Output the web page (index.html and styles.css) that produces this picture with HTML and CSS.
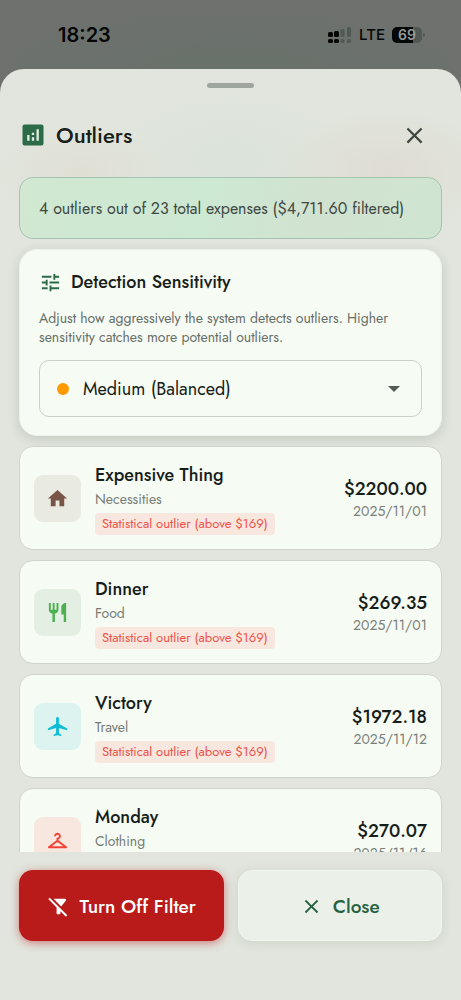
FILE: index.html
```html
<!DOCTYPE html>
<html lang="en">
<head>
<meta charset="utf-8">
<meta name="viewport" content="width=device-width, initial-scale=1">
<title>Outliers</title>
<link rel="stylesheet" href="styles.css">
</head>
<body>
<div class="screen">
  <header class="status">
    <time class="clock">18:23</time>
    <div class="status-right">
      <svg class="signal" viewBox="0 0 24 16" aria-hidden="true">
        <g fill="#050706"><rect x="0" y="5" width="5" height="5" rx="1.5"/><rect x="0" y="12" width="5" height="4" rx="1.5"/><rect x="6" y="4" width="5" height="6" rx="1.5"/><rect x="6" y="12" width="5" height="4" rx="1.5"/></g>
        <g fill="#505953"><rect x="12.500" y="2" width="4" height="8" rx="1.500"/><rect x="12.500" y="12" width="4" height="4" rx="1.500"/><rect x="19" y="0" width="4" height="10" rx="1.500"/><rect x="19" y="12" width="4" height="4" rx="1.500"/></g>
      </svg>
      <span class="network">LTE</span>
      <span class="battery">69</span>
    </div>
  </header>

  <main class="sheet">
    <div class="handle"></div>
    <div class="sheet-head">
      <svg class="head-icon" viewBox="0 0 24 24" aria-hidden="true"><rect x="3" y="3" width="18" height="18" rx="1.800" fill="#2b6b47"/><path fill="#e3ece3" d="M9 17H7v-5h2zM13 17h-2v-3h2zM13 12h-2v-2h2zM17 17h-2V7h2z"/></svg>
      <h1>Outliers</h1>
      <button class="dismiss" type="button" aria-label="Dismiss">
        <svg viewBox="0 0 24 24"><path d="M19 6.410 17.590 5 12 10.590 6.410 5 5 6.410 10.590 12 5 17.590 6.410 19 12 13.410 17.590 19 19 17.590 13.410 12z"/></svg>
      </button>
    </div>

    <p class="summary">4 outliers out of 23 total expenses ($4,711.60 filtered)</p>

    <section class="sensitivity">
      <h2>
        <svg viewBox="0 0 24 24" aria-hidden="true"><path d="M3 17v2h6v-2H3zM3 5v2h10V5H3zm10 16v-2h8v-2h-8v-2h-2v6h2zM7 9v2H3v2h4v2h2V9H7zm14 4v-2H11v2h10zm-6-4h2V7h4V5h-4V3h-2v6z"/></svg>
        <label for="level">Detection Sensitivity</label>
      </h2>
      <p class="hint">Adjust how aggressively the system detects outliers. Higher sensitivity catches more potential outliers.</p>
      <div class="picker">
        <span class="level-dot"></span>
        <select id="level"><option>Medium (Balanced)</option></select>
      </div>
    </section>

    <ul class="expenses">
      <li class="expense">
        <span class="tile home"><svg viewBox="0 0 24 24" aria-hidden="true"><path d="M10 20v-6h4v6h5v-8h3L12 3 2 12h3v8z"/></svg></span>
        <div class="what"><h3>Expensive Thing</h3><p>Necessities</p><span class="chip">Statistical outlier (above $169)</span></div>
        <div class="cost"><strong>$2200.00</strong><time>2025/11/01</time></div>
      </li>
      <li class="expense">
        <span class="tile food"><svg viewBox="0 0 24 24" aria-hidden="true"><path d="M11 9H9V2H7v7H5V2H3v7c0 2.120 1.660 3.840 3.750 3.970V22h2.500v-9.030C11.340 12.840 13 11.120 13 9V2h-2v7zm5-3v8h2.500v8H21V2c-2.760 0-5 2.240-5 4z"/></svg></span>
        <div class="what"><h3>Dinner</h3><p>Food</p><span class="chip">Statistical outlier (above $169)</span></div>
        <div class="cost"><strong>$269.35</strong><time>2025/11/01</time></div>
      </li>
      <li class="expense">
        <span class="tile travel"><svg viewBox="0 0 24 24" aria-hidden="true"><path d="M22 16v-2l-8.500-5V3.500c0-.830-.670-1.500-1.500-1.500s-1.500.670-1.500 1.500V9L2 14v2l8.500-2.500V19L8 20.500V22l4-1 4 1v-1.500L13.500 19v-5.500L22 16z"/></svg></span>
        <div class="what"><h3>Victory</h3><p>Travel</p><span class="chip">Statistical outlier (above $169)</span></div>
        <div class="cost"><strong>$1972.18</strong><time>2025/11/12</time></div>
      </li>
      <li class="expense">
        <span class="tile clothes"><svg viewBox="0 0 24 24" aria-hidden="true"><path d="M21.600 18.200 13 11.750v-.910c1.650-.490 2.800-2.170 2.430-4.050-.260-1.310-1.300-2.400-2.610-2.700C10.540 3.570 8.500 5.300 8.500 7.500h2c0-.830.670-1.500 1.500-1.500s1.500.670 1.500 1.500c0 .840-.690 1.520-1.530 1.500-.540-.010-.970.450-.970.990v1.760L2.400 18.200c-.770.580-.360 1.800.6 1.800h18c.960 0 1.370-1.220.6-1.800zM6 18l6-4.500 6 4.500H6z"/></svg></span>
        <div class="what"><h3>Monday</h3><p>Clothing</p><span class="chip">Statistical outlier (above $169)</span></div>
        <div class="cost"><strong>$270.07</strong><time>2025/11/16</time></div>
      </li>
    </ul>

    <footer class="actions">
      <button class="action danger" type="button">
        <svg viewBox="0 0 24 24" aria-hidden="true"><path d="M19.790 5.610C20.300 4.950 19.830 4 19 4H6.830l7.970 7.970 4.990-6.360zM2.810 2.810 1.390 4.220 10 13v6c0 .550.450 1 1 1h2c.550 0 1-.450 1-1v-2.170l5.780 5.780 1.410-1.410z"/></svg>
        Turn Off Filter
      </button>
      <button class="action plain" type="button">
        <svg viewBox="0 0 24 24" aria-hidden="true"><path d="M19 6.410 17.590 5 12 10.590 6.410 5 5 6.410 10.590 12 5 17.590 6.410 19 12 13.410 17.590 19 19 17.590 13.410 12z"/></svg>
        Close
      </button>
    </footer>
  </main>
</div>
</body>
</html>
```
FILE: styles.css
```css
* { box-sizing: border-box; }

body, h1, h2, h3, p, ul { margin: 0; padding: 0; }

body {
  font-family: Jost, Lato, sans-serif;
  color: #171d19;
  background: #6c716d;
}

button, select { font: inherit; color: inherit; }

.screen {
  height: 100vh;
  display: flex;
  flex-direction: column;
  background:
    radial-gradient(ellipse 240px 60px at 50% 69px, #68716a, transparent),
    #6e716e;
}

.status {
  flex: none;
  height: 69px;
  padding: 0 39px 0 58px;
  display: flex;
  align-items: center;
  justify-content: space-between;
  font-family: Inter, sans-serif;
  color: #050706;
}

.clock { font-size: 20px; font-weight: 600; }

.status-right { display: flex; align-items: center; gap: 7px; }

.signal { width: 24px; height: 16px; }

.network { font-size: 15px; font-weight: 500; line-height: 20px; }

.battery {
  position: relative;
  width: 30px;
  height: 16px;
  border-radius: 5px;
  background: linear-gradient(90deg, #050706 70%, #505953 70%);
  color: #949b96;
  font-size: 14px;
  font-weight: 600;
  line-height: 16px;
  text-align: center;
}

.battery::after {
  content: "";
  position: absolute;
  left: 31px;
  top: 6px;
  width: 2px;
  height: 4px;
  border-radius: 0 2px 2px 0;
  background: #505953;
}

.sheet {
  flex: 1;
  min-height: 0;
  display: flex;
  flex-direction: column;
  border-radius: 24px 24px 0 0;
  background:
    radial-gradient(ellipse 110px 60px at 84% 100px, #dfdcd2, transparent),
    radial-gradient(ellipse 90px 50px at 18% 105px, #e0dfd4, transparent),
    radial-gradient(ellipse 130px 70px at 50% 90px, #dbe3da, transparent),
    #e1e5dd;
}

.handle {
  flex: none;
  width: 47px;
  height: 5px;
  margin: 14px auto 27px;
  border-radius: 3px;
  background: #a0a69f;
}

.sheet-head {
  display: flex;
  align-items: center;
  height: 40px;
  padding: 0 27px 0 19px;
  margin-bottom: 22px;
}

.head-icon { width: 28px; height: 28px; }

.sheet-head h1 {
  flex: 1;
  margin-left: 9px;
  font-size: 22px;
  font-weight: 500;
  line-height: 28px;
}

.dismiss {
  display: grid;
  place-items: center;
  width: 40px;
  height: 40px;
  padding: 0;
  border: 0;
  background: none;
}

.dismiss svg { width: 27px; height: 27px; fill: #3d4740; }

.summary {
  margin: 0 19px 10px;
  padding: 21px 19px 19px;
  border: 1px solid #a5c4ad;
  border-radius: 14px;
  background: linear-gradient(100deg, #d1e8d1, #cde8d3 45%, #d1e2d0 70%, #cfe5d1);
  font-size: 16px;
  line-height: 20px;
  color: #404943;
}

.sensitivity {
  margin: 0 19px 10px;
  padding: 20px 19px 18px;
  border: 1px solid #edf1eb;
  border-radius: 18px;
  background: #f6fbf4;
  box-shadow: 0 3px 12px rgba(50, 65, 52, 0.16);
}

.sensitivity h2 {
  display: flex;
  align-items: center;
  gap: 9px;
  margin-bottom: 15px;
  font-size: 18px;
  font-weight: 500;
  line-height: 24px;
}

.sensitivity h2 svg { width: 23px; height: 23px; fill: #2b6b47; }

.hint {
  margin-bottom: 13px;
  font-size: 14px;
  line-height: 19px;
  color: #666e68;
}

.picker {
  position: relative;
  display: flex;
  align-items: center;
  height: 57px;
  border: 1px solid #cbd1ca;
  border-radius: 10px;
}

.level-dot {
  position: absolute;
  left: 17px;
  width: 12px;
  height: 12px;
  border-radius: 50%;
  background: #ff9a04;
  pointer-events: none;
}

.picker::after {
  content: "";
  position: absolute;
  right: 21px;
  border: 6px solid transparent;
  border-top-color: #535b55;
  border-bottom-width: 0;
  pointer-events: none;
}

.picker select {
  appearance: none;
  width: 100%;
  height: 100%;
  padding: 0 43px;
  border: 0;
  border-radius: 10px;
  background: none;
  font-size: 18px;
}

.expenses {
  flex: 1;
  min-height: 0;
  overflow-y: auto;
  scrollbar-width: none;
  display: flex;
  flex-direction: column;
  gap: 10px;
  padding: 0 19px;
  list-style: none;
}

.expense {
  flex: none;
  display: flex;
  align-items: center;
  gap: 14px;
  padding: 14px;
  border: 1px solid #ced4cc;
  border-radius: 14px;
  background: #f6fbf4;
}

.tile {
  display: grid;
  place-items: center;
  width: 47px;
  height: 47px;
  border-radius: 9px;
}

.tile svg { width: 23px; height: 23px; fill: currentColor; }

.home { background: #e9eae1; color: #795548; }
.food { background: #e4efe3; color: #4caf50; }
.travel { background: #dcf3f0; color: #0fbcd6; }
.clothes { background: #f7e7df; color: #f44336; }

.what { flex: 1; min-width: 0; }

.what h3 { font-size: 18px; font-weight: 500; line-height: 28px; }

.what p {
  margin-bottom: 4px;
  font-size: 14px;
  line-height: 20px;
  color: #757c76;
}

.chip {
  display: block;
  width: fit-content;
  padding: 0 7px;
  border-radius: 4px;
  background: #f7e7df;
  color: #ef5148;
  font-size: 13px;
  line-height: 22px;
  white-space: nowrap;
}

.cost { padding-top: 2px; text-align: right; }

.cost strong {
  display: block;
  font-size: 18px;
  font-weight: 500;
  line-height: 24px;
}

.cost time {
  display: block;
  font-size: 14px;
  line-height: 20px;
  color: #7a817b;
}

.actions {
  flex: none;
  display: grid;
  grid-template-columns: 1fr 1fr;
  gap: 14px;
  padding: 18px 19px 59px;
}

.action {
  display: flex;
  align-items: center;
  justify-content: center;
  gap: 10px;
  height: 71px;
  padding: 2px 0 0;
  border: 0;
  border-radius: 14px;
  font-size: 19px;
  font-weight: 500;
}

.action svg { width: 23px; height: 23px; fill: currentColor; }

.danger {
  background: #b91a1a;
  color: #fff;
  box-shadow: 0 2px 8px rgba(185, 26, 26, 0.5);
}

.plain {
  border: 1px solid #f0f5ee;
  background: #ebf0e9;
  color: #246241;
  box-shadow: 0 2px 12px rgba(50, 65, 52, 0.1);
}
```
